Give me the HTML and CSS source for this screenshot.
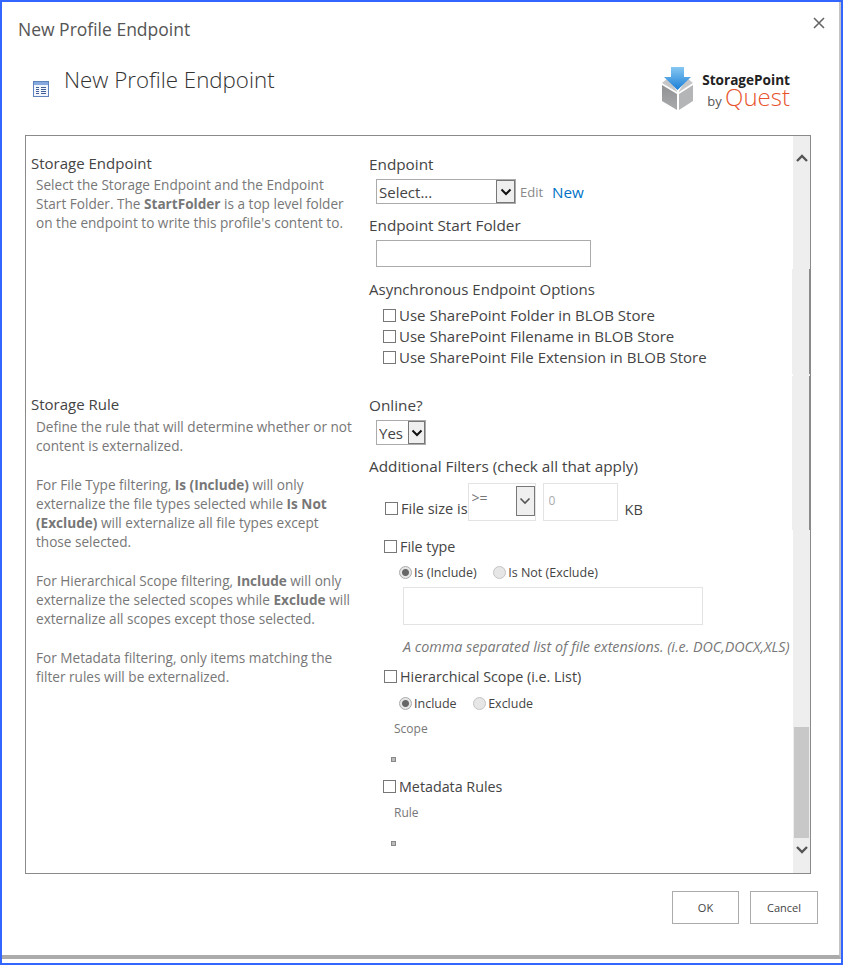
FILE: index.html
```html
<!DOCTYPE html>
<html lang="en">
<head>
    <meta charset="UTF-8" />
    <title>New Profile Endpoint</title>
    <link rel="stylesheet" href="styles.css">
</head>
<body>
<div class="window">
<div class="dialog">
    <div class="title-bar">
        <span class="title">New Profile Endpoint</span>
        <svg class="close" width="12" height="12" viewBox="0 0 12 12"><path d="M1 1l10 10M11 1L1 11" stroke="#666" stroke-width="1.6" fill="none"/></svg>
    </div>

    <div class="page-head">
        <svg class="page-icon" width="16" height="16" viewBox="0 0 16 16">
            <rect x="0.5" y="0.5" width="15" height="15" fill="#f2f6fc" stroke="#5f83bd"/>
            <rect x="1" y="1" width="14" height="3" fill="#86aae0"/>
            <path d="M3 6.5h3M8 6.5h5M3 8.5h3M8 8.5h5M3 10.5h3M8 10.5h5M3 12.5h3M8 12.5h5" stroke="#3f5f96" fill="none"/>
        </svg>
        <h1>New Profile Endpoint</h1>
        <div class="logo">
            <svg width="34" height="45" viewBox="0 0 34 45">
                <defs>
                    <linearGradient id="arrowFill" x1="0" y1="0" x2="0" y2="1">
                        <stop offset="0" stop-color="#86c8f2"/>
                        <stop offset="1" stop-color="#1a7ed6"/>
                    </linearGradient>
                    <linearGradient id="leftFace" x1="0" y1="0" x2="0" y2="1">
                        <stop offset="0" stop-color="#8f9193"/>
                        <stop offset="1" stop-color="#a9abad"/>
                    </linearGradient>
                </defs>
                <polygon points="1,19 16,28 16,44 1,35" fill="url(#leftFace)"/>
                <polygon points="18,28 32,19 32,35 18,44" fill="#b3b5b7"/>
                <polygon points="1,17 7,12 16,25 16,26" fill="#c6c7c9"/>
                <polygon points="32,17 26,12 18,25 18,26" fill="#c6c7c9"/>
                <polygon points="10,1 23,1 23,11 30,11 16.5,24 3,11 10,11" fill="url(#arrowFill)"/>
            </svg>
            <div class="logo-text">
                <span class="logo-name">StoragePoint</span>
                <span class="logo-by">by <span class="logo-quest">Quest</span></span>
            </div>
        </div>
    </div>

    <div class="frame">
        <div class="frame-body">
            <div class="section section-endpoint">
                <div class="info">
                    <h3>Storage Endpoint</h3>
                    <p>Select the Storage Endpoint and the Endpoint<br>Start Folder. The <b>StartFolder</b> is a top level folder<br>on the endpoint to write this profile's content to.</p>
                </div>
                <div class="fields">
                    <label class="lbl">Endpoint</label>
                    <div class="endpoint-row">
                        <div class="select-wrap select-endpoint">
                            <select><option>Select...</option></select>
                            <span class="select-btn"><svg width="12" height="8" viewBox="0 0 12 8"><path d="M1.5 1.5L6 6l4.5-4.5" stroke="#111" stroke-width="2" fill="none"/></svg></span>
                        </div>
                        <span class="edit-link">Edit</span>
                        <a class="new-link">New</a>
                    </div>
                    <label class="lbl lbl-folder">Endpoint Start Folder</label>
                    <input class="text-input folder-input" type="text">
                    <label class="lbl lbl-async">Asynchronous Endpoint Options</label>
                    <div class="check-list">
                        <label class="check-row"><input type="checkbox">Use SharePoint Folder in BLOB Store</label>
                        <label class="check-row"><input type="checkbox">Use SharePoint Filename in BLOB Store</label>
                        <label class="check-row"><input type="checkbox">Use SharePoint File Extension in BLOB Store</label>
                    </div>
                </div>
            </div>

            <div class="section section-rule">
                <div class="info">
                    <h3>Storage Rule</h3>
                    <p>Define the rule that will determine whether or not<br>content is externalized.</p>
                    <p>For File Type filtering, <b>Is (Include)</b> will only<br>externalize the file types selected while <b>Is Not<br>(Exclude)</b> will externalize all file types except<br>those selected.</p>
                    <p>For Hierarchical Scope filtering, <b>Include</b> will only<br>externalize the selected scopes while <b>Exclude</b> will<br>externalize all scopes except those selected.</p>
                    <p>For Metadata filtering, only items matching the<br>filter rules will be externalized.</p>
                </div>
                <div class="fields">
                    <label class="lbl">Online?</label>
                    <div class="select-wrap select-online">
                        <select><option>Yes</option></select>
                        <span class="select-btn"><svg width="12" height="8" viewBox="0 0 12 8"><path d="M1.5 1.5L6 6l4.5-4.5" stroke="#111" stroke-width="2" fill="none"/></svg></span>
                    </div>
                    <label class="lbl lbl-filters">Additional Filters (check all that apply)</label>

                    <div class="size-row">
                        <input type="checkbox">
                        <span class="size-label">File size is</span>
                        <div class="select-wrap select-size">
                            <select disabled><option>&gt;=</option></select>
                            <span class="select-btn"><svg width="12" height="8" viewBox="0 0 12 8"><path d="M1.5 1.5L6 6l4.5-4.5" stroke="#555" stroke-width="1.6" fill="none"/></svg></span>
                        </div>
                        <input class="text-input size-input" type="text" value="0" disabled>
                        <span class="size-unit">KB</span>
                    </div>

                    <label class="check-row filter-row filter-type"><input type="checkbox">File type</label>
                    <div class="radio-row">
                        <label><span class="radio radio-on"></span>Is (Include)</label>
                        <label><span class="radio"></span>Is Not (Exclude)</label>
                    </div>
                    <div class="type-box"></div>
                    <div class="note">A comma separated list of file extensions. (i.e. DOC,DOCX,XLS)</div>

                    <label class="check-row filter-row filter-scope"><input type="checkbox">Hierarchical Scope (i.e. List)</label>
                    <div class="radio-row">
                        <label><span class="radio radio-on"></span>Include</label>
                        <label><span class="radio"></span>Exclude</label>
                    </div>
                    <div class="sub-lbl">Scope</div>
                    <span class="mini-square"></span>

                    <label class="check-row filter-row filter-meta"><input type="checkbox">Metadata Rules</label>
                    <div class="sub-lbl sub-rule">Rule</div>
                    <span class="mini-square"></span>
                </div>
            </div>
        </div>

        <div class="scrollbar">
            <span class="seam seam-top"></span>
            <span class="seam seam-bottom"></span>
            <svg class="arrow-up" width="12" height="8" viewBox="0 0 12 8"><path d="M1 7l5-5 5 5" stroke="#555" stroke-width="2.4" fill="none"/></svg>
            <div class="thumb"></div>
            <svg class="arrow-down" width="12" height="8" viewBox="0 0 12 8"><path d="M1 1l5 5 5-5" stroke="#555" stroke-width="2.4" fill="none"/></svg>
        </div>
    </div>

    <div class="buttons">
        <button>OK</button>
        <button class="btn-cancel">Cancel</button>
    </div>
</div>
</div>
</body>
</html>
```

FILE: styles.css
```css
* {
    box-sizing: border-box;
}
html, body {
    margin: 0;
    background-color: #fff;
}
body {
    font-family: "Open Sans", "Noto Sans", sans-serif;
    color: #444;
}
.window {
    width: 843px;
    height: 965px;
    border: 2px solid #3366ff;
    padding-bottom: 4px;
    overflow: hidden;
}
.dialog {
    height: 957px;
    border-right: 2px solid #c4c4c4;
    border-bottom: 4px solid #ababab;
}
.title-bar {
    height: 64px;
    padding: 15px 0 0 16px;
    display: flex;
    justify-content: space-between;
}
.title {
    font-size: 17.5px;
    line-height: 25px;
    color: #555;
}
.close {
    margin: 0 14px 0 0;
}
.page-head {
    height: 69px;
    padding-left: 31px;
    display: flex;
}
.page-icon {
    margin-top: 15px;
}
h1 {
    margin: -1px 0 0 15px;
    font-size: 22.3px;
    font-weight: 300;
    line-height: 30px;
    color: #333;
}
.logo {
    margin-left: auto;
    margin-right: 49px;
    display: flex;
    height: 45px;
}
.logo-text {
    margin-left: 7px;
    display: flex;
    flex-direction: column;
    align-items: flex-end;
}
.logo-name {
    font-size: 13.6px;
    font-weight: 700;
    line-height: 15px;
    margin: 6px 0 -2px;
    color: #222;
}
.logo-by {
    font-size: 13px;
    line-height: 24px;
    color: #555;
}
.logo-quest {
    font-size: 24px;
    font-weight: 300;
    color: #e8532b;
}
.frame {
    width: 786px;
    height: 739px;
    margin-left: 23px;
    border: 1px solid #8a8a8a;
    display: flex;
}
.frame-body {
    flex: 1;
    padding-top: 17px;
    overflow: hidden;
}
.section {
    display: flex;
}
.section-endpoint {
    height: 241px;
}
.info {
    width: 343px;
    padding-left: 5px;
    flex-shrink: 0;
}
.info h3 {
    margin: -1px 0 1px;
    font-size: 15px;
    font-weight: 400;
    line-height: 22px;
}
.section-rule .info h3 {
    margin-bottom: 2px;
}
.info p {
    margin: 0 0 20px 5px;
    font-size: 13.6px;
    line-height: 19px;
    color: #777;
    white-space: nowrap;
}
.fields {
    flex: 1;
}
.lbl {
    display: block;
    font-size: 15.3px;
    line-height: 22px;
}
.endpoint-row {
    display: flex;
    align-items: center;
    margin: 4px 0 0 7px;
}
.select-wrap {
    position: relative;
    display: block;
}
.select-wrap select {
    appearance: none;
    width: 100%;
    height: 100%;
    border: 1px solid #ababab;
    border-radius: 0;
    background-color: #fff;
    font-family: inherit;
    font-size: 15px;
    color: #444;
    padding: 0 0 0 2px;
}
.select-btn {
    position: absolute;
    top: 1px;
    right: 1px;
    bottom: 1px;
    width: 19px;
    background-color: #efefef;
    border: 1px solid #777;
    display: flex;
    align-items: center;
    justify-content: center;
}
.select-endpoint {
    width: 140px;
    height: 25px;
}
.edit-link {
    margin-left: 4px;
    font-size: 13px;
    color: #888;
}
.new-link {
    margin-left: 9px;
    font-size: 15.2px;
    color: #0072c6;
}
.lbl-folder {
    margin-top: 10px;
}
.text-input {
    display: block;
    border: 1px solid #ababab;
    background-color: #fff;
}
.folder-input {
    width: 215px;
    height: 27px;
    margin: 4px 0 0 7px;
}
.lbl-async {
    margin-top: 11px;
    font-size: 15px;
}
.check-list {
    margin: 5px 0 0 14px;
}
.check-row {
    display: flex;
    align-items: center;
    font-size: 15px;
    line-height: 21px;
}
.filter-row {
    font-size: 14.3px;
}
input[type=checkbox] {
    appearance: none;
    width: 13px;
    height: 13px;
    margin: 0 3px 0 0;
    background-color: #fff;
    border: 1px solid #777;
    flex-shrink: 0;
}
.select-online {
    width: 50px;
    height: 25px;
    margin: 4px 0 0 7px;
}
.select-online .select-btn {
    width: 17px;
}
.lbl-filters {
    margin-top: 10px;
}
.size-row {
    display: flex;
    align-items: flex-start;
    height: 38px;
    margin: 6px 0 0 16px;
    font-size: 14.5px;
}
.size-row input[type=checkbox] {
    margin-top: 19px;
}
.size-label {
    line-height: 20px;
    padding-top: 16px;
}
.select-size {
    width: 68px;
    height: 38px;
}
.select-size select {
    border-color: #e3e3e3;
    font-size: 14px;
    padding: 0 0 9px 3px;
    color: #777;
    opacity: 1;
}
.select-size .select-btn {
    top: 3px;
    bottom: 5px;
    right: 1px;
}
.size-input {
    width: 75px;
    height: 38px;
    margin-left: 7px;
    border-color: #e3e3e3;
    color: #aaa;
    font-family: inherit;
    font-size: 12px;
    padding: 0 0 4px 5px;
}
.size-unit {
    margin-left: 7px;
    line-height: 20px;
    padding-top: 17px;
}
.filter-type {
    margin: 15px 0 0 15px;
}
.radio-row {
    display: flex;
    gap: 16.5px;
    margin: 5px 0 0 30px;
    font-size: 12.5px;
    line-height: 21px;
}
.radio-row label {
    display: flex;
    align-items: center;
}
.radio {
    width: 13px;
    height: 13px;
    margin-right: 2px;
    border-radius: 50%;
    background-color: #e6e6e6;
    border: 1px solid #c4c4c4;
}
.radio-on {
    background: radial-gradient(circle, #666 0, #666 3px, #e6e6e6 4px);
    border-color: #aaa;
}
.type-box {
    width: 300px;
    height: 38px;
    margin: 4px 0 0 34px;
    border: 1px solid #e3e3e3;
}
.note {
    margin: 13px 0 0 34px;
    font-size: 14.3px;
    font-style: italic;
    line-height: 18px;
    color: #777;
    white-space: nowrap;
}
.filter-scope {
    margin: 10px 0 0 15px;
}
.filter-scope + .radio-row {
    margin-top: 6px;
}
.sub-lbl {
    margin: 6px 0 0 25px;
    font-size: 12px;
    line-height: 18px;
    color: #777;
}
.mini-square {
    display: block;
    width: 5px;
    height: 5px;
    margin: 19px 0 0 22px;
    background-color: #bbb;
    border: 1px solid #888;
}
.filter-meta {
    margin: 14px 0 0 14px;
}
.sub-rule {
    margin-top: 7px;
}
.scrollbar {
    position: relative;
    width: 17px;
    background-color: #eee;
    display: flex;
    flex-direction: column;
    align-items: center;
    flex-shrink: 0;
}
.seam {
    position: absolute;
    left: -1px;
    width: 19px;
    background-color: #eee;
    border-right: 2px solid #8a8a8a;
}
.seam-top {
    top: 133px;
    height: 105px;
}
.seam-bottom {
    top: 240px;
    height: 154px;
}
.arrow-up {
    margin-top: 18px;
}
.thumb {
    width: 15px;
    height: 111px;
    margin-top: 565px;
    background-color: #c8c8c8;
}
.arrow-down {
    margin-top: 8px;
}
.buttons {
    display: flex;
    justify-content: flex-end;
    gap: 11px;
    padding: 17px 21px 0 0;
}
.buttons button {
    width: 67px;
    height: 33px;
    background-color: #fff;
    border: 1px solid #ababab;
    font-family: inherit;
    font-size: 11px;
    color: #444;
}
.buttons .btn-cancel {
    width: 68px;
}
```
